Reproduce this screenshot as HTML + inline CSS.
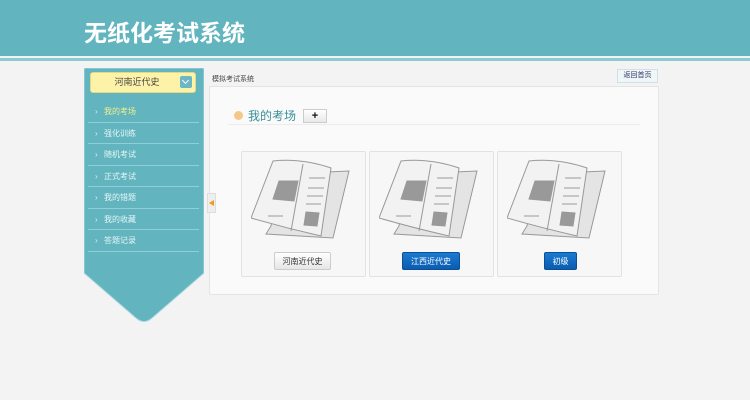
<!DOCTYPE html>
<html><head><meta charset="utf-8"><style>
*{margin:0;padding:0;box-sizing:border-box}
body{width:750px;height:400px;overflow:hidden;background:#f3f3f3;font-family:"Liberation Sans","Noto Sans CJK SC",sans-serif;position:relative}
.hdr{position:absolute;left:0;top:0;width:750px;height:56px;background:#62b4bf}
.hdr h1{position:absolute;left:84px;top:14px;color:#fff;font-size:23px;font-weight:bold;letter-spacing:0px;font-family:"Noto Sans CJK SC",sans-serif}
.l2{position:absolute;left:0;top:58px;width:750px;height:3px;background:#8cc9d2}
.side{position:absolute;left:84px;top:68px;width:120px;height:256px;}
.sel{position:absolute;left:90px;top:72px;width:106px;height:21px;background:#fdf3a8;border:1px solid #e3d88a;border-radius:3px;font-size:9px;color:#444;text-align:center;line-height:19px;padding-right:12px}
.sel i{position:absolute;right:3px;top:3px;width:12px;height:12px;background:#6bb7c6;border-radius:2px}
.sel i:after{content:"";position:absolute;left:3px;top:2px;width:4px;height:4px;border-right:1px solid #fff;border-bottom:1px solid #fff;transform:rotate(45deg)}
.menu{position:absolute;left:88px;top:101px;width:111px}
.menu div{height:21.5px;border-bottom:1px solid #8fd0d8;font-size:8px;color:#e6f6f8;line-height:21px;padding-left:16px;position:relative}
.menu div:before{content:"›";position:absolute;left:7px;color:#d5eff2}
.menu div.on{color:#f5f08a}
.bc{position:absolute;left:212px;top:74px;font-size:7px;color:#444}
.home{position:absolute;left:617px;top:69px;width:41px;height:14px;border:1px solid #cfe1e6;background:#eef6f8;font-size:7px;color:#336;text-align:center;line-height:12px}
.panel{position:absolute;left:209px;top:86px;width:450px;height:209px;background:#fafafa;border:1px solid #e4e4e4;border-radius:2px}
.tog{position:absolute;left:207px;top:193px;width:9px;height:20px;background:#eee;border:1px solid #ddd}
.tog:after{content:"";position:absolute;left:1px;top:6px;border-right:5px solid #f09a20;border-top:3px solid transparent;border-bottom:3px solid transparent}
.dot{position:absolute;left:234px;top:111px;width:9px;height:9px;border-radius:50%;background:#f3c88a}
.tt{position:absolute;left:248px;top:107px;font-size:12px;color:#3a8f9a}
.plus{position:absolute;left:303px;top:109px;width:24px;height:14px;border:1px solid #ccc;background:linear-gradient(#fff,#e8e8e8);font-size:11px;font-weight:bold;text-align:center;line-height:12px;color:#111}
.rule{position:absolute;left:228px;top:124px;width:412px;height:1px;background:#ececec}
.card{position:absolute;top:151px;width:125px;height:126px;background:#f7f7f7;border:1px solid #e2e2e2;border-radius:2px}
.card svg{position:absolute;left:9px;top:4px}
.btn{position:absolute;top:100px;height:18px;font-size:8px;line-height:17px;text-align:center;border-radius:2px}
.g{background:linear-gradient(#fff,#e6e6e6);border:1px solid #ccc;color:#333}
.b{background:linear-gradient(#1c7ad0,#0a5cb0);border:1px solid #0a4f9a;color:#fff}
</style></head><body>
<div class="hdr"><h1>无纸化考试系统</h1></div>
<div class="l2"></div>
<svg class="side" viewBox="0 0 120 256" width="120" height="256" style="position:absolute;left:84px;top:68px"><path d="M2 0H118Q120 0 120 2V205L68 250Q60 257 52 250L0 205V2Q0 0 2 0Z" fill="#62b4bf" stroke="#a6d6dd" stroke-width="1"/></svg>
<div class="sel">河南近代史<i></i></div>
<div class="menu">
<div class="on">我的考场</div><div>强化训练</div><div>随机考试</div><div>正式考试</div><div>我的错题</div><div>我的收藏</div><div>答题记录</div>
</div>
<div class="bc">模拟考试系统</div>
<div class="home">返回首页</div>
<div class="panel"></div>
<div class="tog"></div>
<div class="dot"></div><div class="tt">我的考场</div><div class="plus">+</div>
<div class="rule"></div>
<div class="card" style="left:241px"><svg width="100" height="90" viewBox="0 0 100 90"><g stroke="#999" stroke-width="1"><path d="M20 70L30 18L98 15L82 82L15 78Z" fill="#e4e4e4"/><path d="M22 5Q50 2 80 12L70 80Q35 72 0 62Z" fill="#f2f2f2"/><path d="M52 8L40 75" fill="none"/><path d="M28 25L47 25L43 45L22 43Z" fill="#999"/><path d="M55 56L68 57L66 70L53 69Z" fill="#999"/><path d="M58 22H74M57 32H73M56 40H72M55 48H70M17 60H32" fill="none"/></g></svg><div class="btn g" style="left:32px;width:57px">河南近代史</div></div>
<div class="card" style="left:369px"><svg width="100" height="90" viewBox="0 0 100 90"><g stroke="#999" stroke-width="1"><path d="M20 70L30 18L98 15L82 82L15 78Z" fill="#e4e4e4"/><path d="M22 5Q50 2 80 12L70 80Q35 72 0 62Z" fill="#f2f2f2"/><path d="M52 8L40 75" fill="none"/><path d="M28 25L47 25L43 45L22 43Z" fill="#999"/><path d="M55 56L68 57L66 70L53 69Z" fill="#999"/><path d="M58 22H74M57 32H73M56 40H72M55 48H70M17 60H32" fill="none"/></g></svg><div class="btn b" style="left:32px;width:58px">江西近代史</div></div>
<div class="card" style="left:497px"><svg width="100" height="90" viewBox="0 0 100 90"><g stroke="#999" stroke-width="1"><path d="M20 70L30 18L98 15L82 82L15 78Z" fill="#e4e4e4"/><path d="M22 5Q50 2 80 12L70 80Q35 72 0 62Z" fill="#f2f2f2"/><path d="M52 8L40 75" fill="none"/><path d="M28 25L47 25L43 45L22 43Z" fill="#999"/><path d="M55 56L68 57L66 70L53 69Z" fill="#999"/><path d="M58 22H74M57 32H73M56 40H72M55 48H70M17 60H32" fill="none"/></g></svg><div class="btn b" style="left:46px;width:33px">初级</div></div>
</body></html>
